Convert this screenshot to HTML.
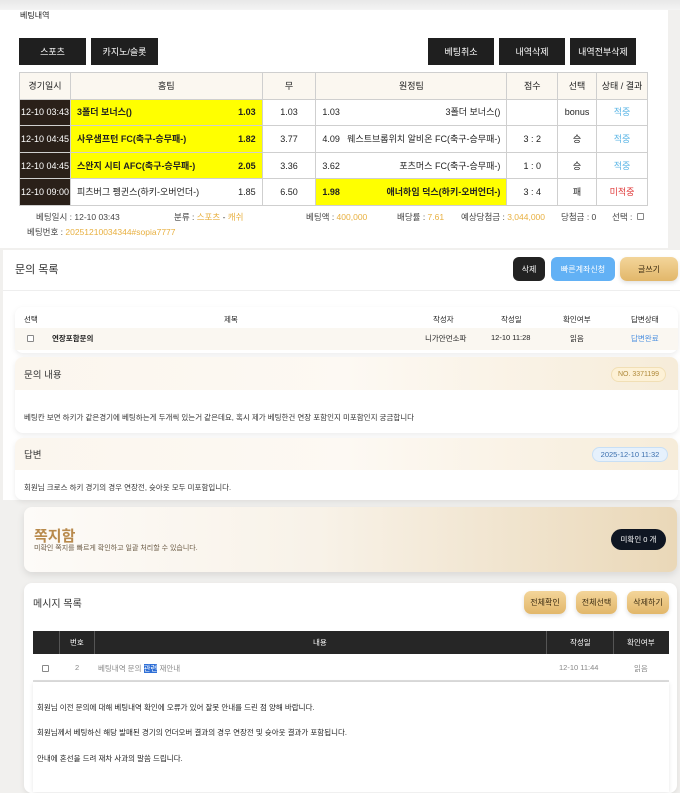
<!DOCTYPE html>
<html><head><meta charset="utf-8"><style>
*{margin:0;padding:0;box-sizing:border-box}
body{width:680px;height:781px;background:#f1f0ee;font-family:"Liberation Sans","Noto Sans CJK KR",sans-serif;color:#222;position:relative;overflow:hidden;font-size:9px}
.a{position:absolute}
.btn{position:absolute;background:#1f1f1f;color:#fff;font-size:9px;display:flex;align-items:center;justify-content:center}
table{border-collapse:collapse;position:absolute}
td{border:1px solid #cfcfcf;font-size:9px;height:26.6px;text-align:center;white-space:nowrap;line-height:12px}
td .f{display:flex;justify-content:space-between;align-items:baseline;padding:0 6px}
.y{background:#ffff00;font-weight:bold}
.d{background:#2a2019;color:#fff}
.o{color:#e8b040}
.bl{color:#5cb6e6}
.card{position:absolute;background:#fff;border-radius:8px;box-shadow:0 2px 6px rgba(0,0,0,.08)}
.gold{position:absolute;border-radius:7px;background:linear-gradient(#f3d59a,#e2b76a);color:#3a2a10;font-size:8px;display:flex;align-items:center;justify-content:center;box-shadow:0 2px 4px rgba(0,0,0,.12)}
.cb{position:absolute;width:7px;height:7px;border:1px solid #888;border-radius:1px;background:#fff}
</style></head><body>
<div class="a" style="left:0;top:0;width:680px;height:10px;background:linear-gradient(#e8e8e8,#f4f4f4)"></div>
<div class="a" style="left:0;top:10px;width:668px;height:238px;background:#fff"></div>
<div class="a" style="left:20px;top:10px;font-size:8px">베팅내역</div>
<div class="btn" style="left:19px;top:38px;width:67px;height:27px">스포츠</div>
<div class="btn" style="left:91px;top:38px;width:67px;height:27px">카지노/슬롯</div>
<div class="btn" style="left:428px;top:38px;width:66px;height:27px">베팅취소</div>
<div class="btn" style="left:499px;top:38px;width:66px;height:27px">내역삭제</div>
<div class="btn" style="left:570px;top:38px;width:66px;height:27px">내역전부삭제</div>
<table style="left:19px;top:72px;width:629px">
<colgroup><col style="width:51px"><col style="width:192px"><col style="width:54px"><col style="width:191px"><col style="width:51px"><col style="width:39px"><col style="width:51px"></colgroup>
<tr style="background:#fbf7f0"><td>경기일시</td><td>홈팀</td><td>무</td><td>원정팀</td><td>점수</td><td>선택</td><td>상태 / 결과</td></tr>
<tr><td class="d">12-10 03:43</td><td class="y"><div class="f"><span>3폴더 보너스()</span><span>1.03</span></div></td><td>1.03</td><td><div class="f"><span>1.03</span><span>3폴더 보너스()</span></div></td><td></td><td>bonus</td><td class="bl">적중</td></tr>
<tr><td class="d">12-10 04:45</td><td class="y"><div class="f"><span>사우샘프턴 FC(축구-승무패-)</span><span>1.82</span></div></td><td>3.77</td><td><div class="f"><span>4.09</span><span>웨스트브롬위치 알비온 FC(축구-승무패-)</span></div></td><td>3 : 2</td><td>승</td><td class="bl">적중</td></tr>
<tr><td class="d">12-10 04:45</td><td class="y"><div class="f"><span>스완지 시티 AFC(축구-승무패-)</span><span>2.05</span></div></td><td>3.36</td><td><div class="f"><span>3.62</span><span>포츠머스 FC(축구-승무패-)</span></div></td><td>1 : 0</td><td>승</td><td class="bl">적중</td></tr>
<tr><td class="d">12-10 09:00</td><td><div class="f"><span>피츠버그 펭귄스(하키-오버언더-)</span><span>1.85</span></div></td><td>6.50</td><td class="y"><div class="f"><span>1.98</span><span>애너하임 덕스(하키-오버언더-)</span></div></td><td>3 : 4</td><td>패</td><td style="color:#e03a3a">미적중</td></tr>
</table>
<div class="a" style="left:36px;top:211px;font-size:8.5px;color:#444">베팅일시 : 12-10 03:43</div>
<div class="a" style="left:174px;top:211px;font-size:8.5px;color:#444">분류 : <span class="o">스포츠</span> - <span class="o">캐쉬</span></div>
<div class="a" style="left:306px;top:211px;font-size:8.5px;color:#444">베팅액 : <span class="o">400,000</span></div>
<div class="a" style="left:397px;top:211px;font-size:8.5px;color:#444">배당률 : <span class="o">7.61</span></div>
<div class="a" style="left:461px;top:211px;font-size:8.5px;color:#444">예상당첨금 : <span class="o">3,044,000</span></div>
<div class="a" style="left:561px;top:211px;font-size:8.5px;color:#444">당첨금 : 0</div>
<div class="a" style="left:612px;top:211px;font-size:8.5px;color:#444">선택 :</div><div class="cb" style="left:637px;top:213px"></div>
<div class="a" style="left:27px;top:226px;font-size:8.5px;color:#444">베팅번호 : <span class="o">20251210034344#sopia7777</span></div>

<div class="a" style="left:3px;top:250px;width:677px;height:250px;background:#fff"></div>
<div class="a" style="left:15px;top:261px;font-size:11px;color:#333">문의 목록</div>
<div class="a" style="left:3px;top:290px;width:677px;height:1px;background:#eee"></div>
<div class="a" style="left:513px;top:257px;width:32px;height:24px;border-radius:6px;background:#222;color:#fff;font-size:8px;display:flex;align-items:center;justify-content:center">삭제</div>
<div class="a" style="left:551px;top:257px;width:64px;height:24px;border-radius:6px;background:#62b1f5;color:#fff;font-size:8px;display:flex;align-items:center;justify-content:center">빠른계좌신청</div>
<div class="gold" style="left:620px;top:257px;width:58px;height:24px">글쓰기</div>
<div class="card" style="left:15px;top:307px;width:663px;height:46px"></div>
<div class="a" style="left:15px;top:328px;width:663px;height:22px;background:#faf7f1"></div>
<div class="a" style="left:24px;top:314px;font-size:7.5px">선택</div>
<div class="a" style="left:224px;top:314px;font-size:7.5px">제목</div>
<div class="a" style="left:433px;top:314px;font-size:7.5px">작성자</div>
<div class="a" style="left:501px;top:314px;font-size:7.5px">작성일</div>
<div class="a" style="left:563px;top:314px;font-size:7.5px">확인여부</div>
<div class="a" style="left:631px;top:314px;font-size:7.5px">답변상태</div>
<div class="cb" style="left:27px;top:335px"></div>
<div class="a" style="left:52px;top:333px;font-size:7.5px;font-weight:bold">연장포함문의</div>
<div class="a" style="left:425px;top:333px;font-size:7.5px">니가안먼소파</div>
<div class="a" style="left:491px;top:333px;font-size:7.5px">12-10 11:28</div>
<div class="a" style="left:570px;top:333px;font-size:7.5px">읽음</div>
<div class="a" style="left:631px;top:333px;font-size:7.5px;color:#4a8fe0">답변완료</div>
<div class="card" style="left:15px;top:357px;width:663px;height:76px"></div>
<div class="a" style="left:15px;top:357px;width:663px;height:33px;border-radius:8px 8px 0 0;background:linear-gradient(90deg,#fbf6ee,#fdf9f3 50%,#f6ecd9)"></div>
<div class="a" style="left:24px;top:367px;font-size:9.5px;color:#333">문의 내용</div>
<div class="a" style="left:611px;top:367px;width:55px;height:15px;border-radius:8px;background:#fdf1d6;border:1px solid #f1dfb5;color:#b08a3a;font-size:7px;display:flex;align-items:center;justify-content:center">NO. 3371199</div>
<div class="a" style="left:24px;top:412px;font-size:7.5px;color:#333">베팅칸 보면 하키가 같은경기에 베팅하는게 두개씩 있는거 같은데요, 혹시 제가 베팅한건 연장 포함인지 미포함인지 궁금합니다</div>
<div class="card" style="left:15px;top:438px;width:663px;height:62px"></div>
<div class="a" style="left:15px;top:438px;width:663px;height:32px;border-radius:8px 8px 0 0;background:linear-gradient(90deg,#fbf6ee,#fdf9f3 50%,#f6ecd9)"></div>
<div class="a" style="left:24px;top:447px;font-size:9.5px;color:#333">답변</div>
<div class="a" style="left:592px;top:447px;width:76px;height:15px;border-radius:8px;background:#e6f1fc;border:1px solid #c8dff5;color:#3b6fae;font-size:7.5px;display:flex;align-items:center;justify-content:center">2025-12-10 11:32</div>
<div class="a" style="left:24px;top:482px;font-size:7.5px;color:#333">회원님 크로스 하키 경기의 경우 연장전, 슛아웃 모두 미포함입니다.</div>

<div class="a" style="left:24px;top:507px;width:653px;height:65px;border-radius:8px;background:linear-gradient(90deg,#fdfbf8,#f8f2e8 45%,#ead8b8);box-shadow:0 3px 8px rgba(0,0,0,.1)"></div>
<div class="a" style="left:34px;top:525px;font-size:15px;color:#b88a4c;font-weight:bold">쪽지함</div>
<div class="a" style="left:34px;top:543px;font-size:7px;color:#6a5a44">미확인 쪽지를 빠르게 확인하고 일괄 처리할 수 있습니다.</div>
<div class="a" style="left:611px;top:529px;width:55px;height:21px;border-radius:11px;background:#0f1622;color:#fff;font-size:7.5px;display:flex;align-items:center;justify-content:center">미확인 0 개</div>
<div class="card" style="left:24px;top:583px;width:653px;height:210px"></div>
<div class="a" style="left:33px;top:595px;font-size:10px;color:#333">메시지 목록</div>
<div class="gold" style="left:524px;top:591px;width:42px;height:23px">전체확인</div>
<div class="gold" style="left:576px;top:591px;width:41px;height:23px">전체선택</div>
<div class="gold" style="left:627px;top:591px;width:42px;height:23px">삭제하기</div>
<div class="a" style="left:33px;top:631px;width:636px;height:23px;background:#262626"></div>
<div class="a" style="left:59px;top:631px;width:1px;height:23px;background:#555"></div>
<div class="a" style="left:94px;top:631px;width:1px;height:23px;background:#555"></div>
<div class="a" style="left:546px;top:631px;width:1px;height:23px;background:#555"></div>
<div class="a" style="left:613px;top:631px;width:1px;height:23px;background:#555"></div>
<div class="a" style="left:70px;top:637px;font-size:7.5px;color:#fff">번호</div>
<div class="a" style="left:313px;top:637px;font-size:7.5px;color:#fff">내용</div>
<div class="a" style="left:570px;top:637px;font-size:7.5px;color:#fff">작성일</div>
<div class="a" style="left:627px;top:637px;font-size:7.5px;color:#fff">확인여부</div>
<div class="cb" style="left:42px;top:665px"></div>
<div class="a" style="left:75px;top:663px;font-size:7.5px;color:#888">2</div>
<div class="a" style="left:98px;top:663px;font-size:7.5px;color:#888">베팅내역 문의 <span style="background:#2f6fd6;color:#fff">관련</span> 재안내</div>
<div class="a" style="left:559px;top:663px;font-size:7.5px;color:#888">12-10 11:44</div>
<div class="a" style="left:634px;top:663px;font-size:7.5px;color:#888">읽음</div>
<div class="a" style="left:33px;top:680px;width:636px;height:2px;background:#ddd"></div>
<div class="a" style="left:33px;top:682px;width:636px;height:110px;background:#fff;box-shadow:0 1px 4px rgba(0,0,0,.1)"></div>
<div class="a" style="left:37px;top:702px;font-size:7.5px;color:#222">회원님 이전 문의에 대해 베팅내역 확인에 오류가 있어 잘못 안내를 드린 점 양해 바랍니다.</div>
<div class="a" style="left:37px;top:727px;font-size:7.5px;color:#222">회원님께서 베팅하신 해당 발매된 경기의 언더오버 결과의 경우 연장전 및 슛아웃 결과가 포함됩니다.</div>
<div class="a" style="left:37px;top:753px;font-size:7.5px;color:#222">안내에 혼선을 드려 재차 사과의 말씀 드립니다.</div>
</body></html>
